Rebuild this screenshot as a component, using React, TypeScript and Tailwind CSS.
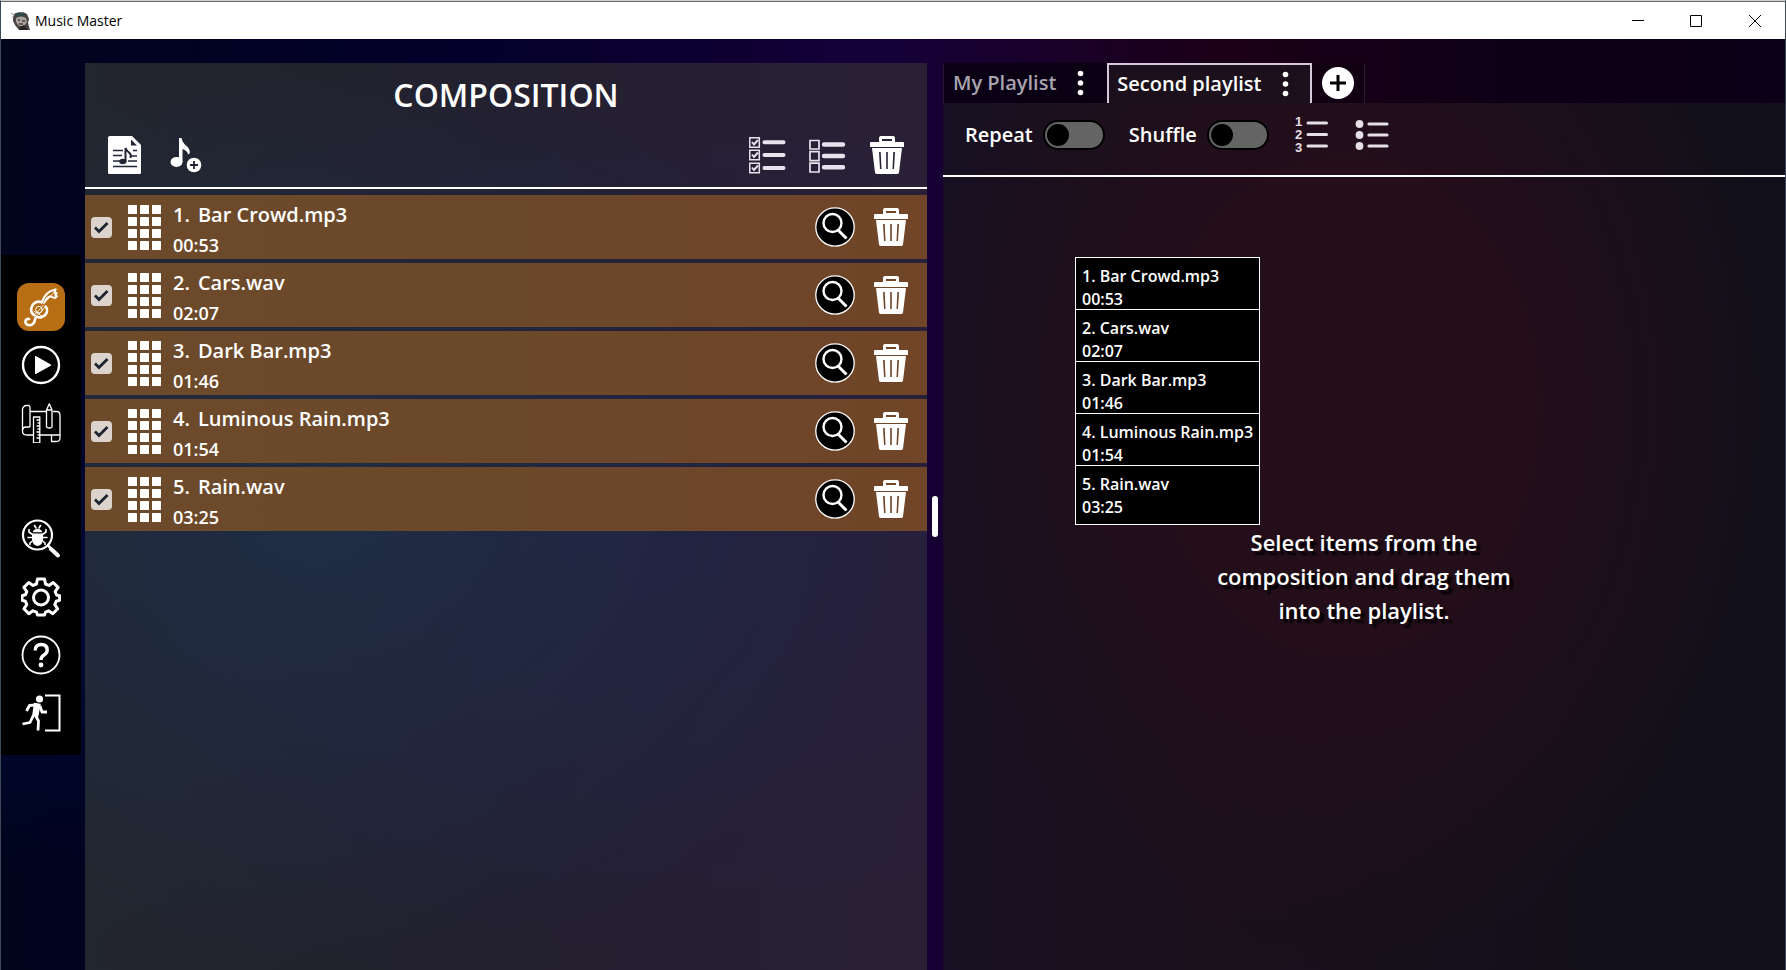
import React from "react";

type IconProps = { className?: string };

const tracks = [
  { title: "Bar Crowd.mp3", time: "00:53" },
  { title: "Cars.wav", time: "02:07" },
  { title: "Dark Bar.mp3", time: "01:46" },
  { title: "Luminous Rain.mp3", time: "01:54" },
  { title: "Rain.wav", time: "03:25" },
];

function AppIcon() {
  return (
    <svg viewBox="0 0 20 20" className="size-5" aria-hidden="true">
      <path d="M2 6 4 2l4 1 4-2 4 2 2 5-1 4 2 7H8L4 14 2 10Z" fill="#4a4444" />
      <path d="M5 2 9 1l5 2 2 3-6-1-5 1Z" fill="#2f4a46" />
      <path d="M5 7q5-3 10 0l1 4-3 4H8l-3-4Z" fill="#a9a19b" />
      <path d="M7 9h2M11 10h3M8 13h4" stroke="#4c4240" strokeWidth="1.3" />
      <path d="M0 2l3 2M1 6l2 1" stroke="#8a8a8a" />
      <path d="M9 16l4-2 4 5H8Z" fill="#2c2325" />
    </svg>
  );
}

function GuitarClefIcon() {
  return (
    <svg viewBox="0 0 144 144" className="size-12" fill="none" stroke="#fff" strokeLinecap="round" strokeLinejoin="round" aria-hidden="true">
      <path d="M36 108c-8-2-13 5-10 12 4 9 19 9 25-1 4-8 2-15 8-18 8 4 20 2 27-7 6-8 5-18 0-23" strokeWidth="8" />
      <path d="M74 58c-14-6-28 3-31 17-2 10 2 18 10 22" strokeWidth="8" />
      <path d="M74 58 82 42q6-11 17-17l17-6-4 10 7 1-4 7 5 3-6 5-6-2-9-3-9 5-8 13" strokeWidth="6" />
      <path d="M80 62 108 32" strokeWidth="3" />
      <circle cx="66" cy="80" r="10" strokeWidth="3" />
      <path d="m52 85 22 14M56 92l24-26M62 97l22-24" strokeWidth="2.5" />
    </svg>
  );
}

function PlayIcon() {
  return (
    <svg viewBox="0 0 40 40" className="size-10" aria-hidden="true">
      <circle cx="20" cy="20" r="18" fill="none" stroke="#fff" strokeWidth="2.4" />
      <path d="M14 11.500v17q0 .8.8.4l15-8.200q.8-.7 0-1.300l-15-8.300q-.8-.4-.8.4Z" fill="#fff" />
    </svg>
  );
}

function BlueprintIcon() {
  return (
    <svg viewBox="0 0 40 40" className="size-10" fill="none" stroke="#fff" strokeWidth="1.300" strokeLinejoin="round" aria-hidden="true">
      <path d="M9 24V5.500a3 3 0 0 0-1-3H5.500a4 4 0 0 0-4 4V28q0 4 4 4H12M9 24H5q-3.500 0-3.500 4M9 8.500h16.500M32 8.500h3.500q3.500 0 3.500 4V35q0 3.500-4 3.500h-4.500V32H19M30.500 32H39M26 8.500H9" />
      <path d="M12.500 14h6.300v26h-6.300ZM15.500 17h3M16.500 20h2M15.500 23h3M16.500 26h2M15.500 29h3M16.500 32h2M15.500 35h3" />
      <path d="M25.500 7 28.300.800 31 7v16.500q0 1.500-2.700 1.500t-2.800-1.500ZM25.500 7H31" fill="#000" />
    </svg>
  );
}

function BugSearchIcon() {
  return (
    <svg viewBox="0 0 40 40" className="size-10" fill="none" stroke="#fff" strokeLinecap="round" aria-hidden="true">
      <circle cx="16.500" cy="16" r="14.500" strokeWidth="2.200" />
      <path d="m27 26.500 2.500 2.500" strokeWidth="2.500" />
      <path d="m30 30 7 6.500" strokeWidth="4" />
      <path d="M12 12q4.500-4.500 9 0v1.300h-9ZM11 14.500h11v5q0 6.500-5.500 7.500-5.500-1-5.500-7.500Z" fill="#fff" stroke="none" />
      <path d="M13.500 6.500 15 9M19.500 6.500 18 9M11.500 15.500 8 13V10.500M21.500 15.500l3.500-2.500V10.500M11.500 18.500H7M21.500 18.500H26M12 21.500l-3 2.500V25.500M21 21.500l3 2.500V25.500" strokeWidth="1.600" />
    </svg>
  );
}

function GearIcon() {
  return (
    <svg viewBox="0 0 40 40" className="size-10" fill="none" stroke="#fff" strokeWidth="3" strokeLinejoin="round" aria-hidden="true">
      <path d="M16.500 2h7l1 5 3.500 1.400 4.200-2.900 4.900 4.900-2.900 4.200 1.400 3.400 3 .8v4.400l-3.400 1-1.400 3.400 2.900 4.200-4.900 4.900-4.200-2.900-3.100 1.300-1 3h-7l-1-3-3.500-1.300-4.200 2.900-4.900-4.900 2.900-4.200-1.400-3.400-3.400-1v-4.400l3.400-1 1.400-3.200-2.900-4.200 4.900-4.900L12 8.400 15.500 7Z" />
      <circle cx="20" cy="20.500" r="7.500" />
    </svg>
  );
}

function HelpIcon() {
  return (
    <svg viewBox="0 0 40 40" className="size-10" fill="none" stroke="#fff" aria-hidden="true">
      <circle cx="20" cy="20" r="18.500" strokeWidth="1.800" />
      <path d="M14.200 15.500q0-6 6-6t6 5.500q0 3-3.200 5-3 1.800-3 5" strokeWidth="3.400" />
      <circle cx="20" cy="30" r="2.400" fill="#fff" stroke="none" />
    </svg>
  );
}

function ExitIcon() {
  return (
    <svg viewBox="0 0 40 40" className="size-10" fill="none" stroke="#fff" aria-hidden="true">
      <path d="M24 2.500h14.500v35H24" strokeWidth="2" />
      <circle cx="18.500" cy="6" r="3.600" fill="#fff" stroke="none" />
      <path d="M15.500 11.800 8.500 12.500 5.500 18M19 13l2 6h5M12.500 22l-3.500 7.500L1.500 31M14.500 22.500l3 5.500-.5 9.500" strokeWidth="2.800" strokeLinejoin="round" />
      <path d="m13.500 10.500 5.500 1-2.500 12-4.500-1.500Z" fill="#fff" strokeWidth="1.500" strokeLinejoin="round" />
    </svg>
  );
}

function SheetMusicIcon() {
  return (
    <svg viewBox="0 0 40 40" className="size-10" aria-hidden="true">
      <path d="M5 1h22l9 9v27.500q0 1.500-1.500 1.500h-30Q3 39 3 37.500v-35Q3 1 5 1Z" fill="#fff" />
      <path d="M26 4.500v6h6Z" fill="#222436" />
      <path d="M8 15.500h10M8 20.500h9M8 26h7M25 21h7M28 15.500h4M23 26h9M8 31.500h24" stroke="#222436" strokeWidth="1.300" />
      <path d="M20.500 27V13q1 3 4 5 2 2 1 5" fill="none" stroke="#222436" strokeWidth="2" />
      <ellipse cx="17.800" cy="26.500" rx="3.600" ry="2.800" fill="#222436" />
    </svg>
  );
}

function AddNoteIcon() {
  return (
    <svg viewBox="0 0 40 40" className="size-10" aria-hidden="true">
      <ellipse cx="11.500" cy="27" rx="6" ry="5" fill="#fff" />
      <path d="M14 27V3h2.600q.5 4.500 5 8 4 3.500 3 7.500l-1.500 1q-.5-4-5.600-5.500v13Z" fill="#fff" />
      <circle cx="29" cy="30" r="7.300" fill="#fff" />
      <path d="M29 26v8M25 30h8" stroke="#222436" strokeWidth="1.800" />
    </svg>
  );
}

function CheckListIcon({ checked }: { checked: boolean }) {
  return checked ? (
    <svg viewBox="0 0 40 40" className="size-10" fill="none" stroke="#e6e3ee" aria-hidden="true">
      <path d="M2.800 2.800h9.500v9.500H2.800ZM2.800 15.300h9.500v9.500H2.800ZM2.800 28.300h9.500v9.500H2.800Z" strokeWidth="1.500" />
      <path d="m5 7 2 2.500L11 5M5 19.500 7 22l4-4.500M5 32.500 7 35l4-4.500" strokeWidth="2" />
      <path d="M17.500 7.200h19M17.500 20h19M17.500 33h19" strokeWidth="4" strokeLinecap="round" />
    </svg>
  ) : (
    <svg viewBox="0 0 40 40" className="size-10" fill="none" stroke="#e6e3ee" aria-hidden="true">
      <path d="M3 5.500h9v8.500H3ZM3 16.700h9v9H3ZM3 28.200h9V37H3Z" strokeWidth="1.700" />
      <path d="M17 9.500h19M17 21h19M17 32.300h19" strokeWidth="4.400" strokeLinecap="round" />
    </svg>
  );
}

function TrashIcon() {
  return (
    <svg viewBox="0 0 40 40" className="size-10" aria-hidden="true">
      <path fillRule="evenodd" fill="#fff" d="M14 1h12q2 0 2 2v4h8q1 0 1 1v4H3V8q0-1 1-1h8V3q0-2 2-2ZM15 4v2h10V4Z" />
      <path fillRule="evenodd" fill="#fff" d="M5 13h30l-3 24.500q-.3 1.500-2 1.500H10q-1.700 0-2-1.500ZM12 17l1 17h1.500L13.700 17ZM19.200 17v17h1.600V17ZM26.300 17l-.8 17H27l1-17Z" />
    </svg>
  );
}

function DragGrid({ className = "" }: IconProps) {
  return (
    <svg viewBox="0 0 33 45" className={className} fill="#fff" aria-hidden="true">
      {[0, 12, 24].map((x) =>
        [0, 12, 24, 36].map((y) => <rect key={`${x}-${y}`} x={x} y={y} width="9" height="9" rx="0.5" />)
      )}
    </svg>
  );
}

function SearchIcon() {
  return (
    <svg viewBox="0 0 40 40" className="size-10" fill="none" stroke="#fff" aria-hidden="true">
      <circle cx="20" cy="20" r="19.200" fill="#000" strokeWidth="1.300" />
      <circle cx="17.500" cy="16" r="9" strokeWidth="2.400" />
      <path d="m23.500 23.500 8 8" strokeWidth="3" />
    </svg>
  );
}

function DotsIcon() {
  return (
    <svg viewBox="0 0 24 32" className="h-8 w-6" fill="#fff" aria-hidden="true">
      <circle cx="12.500" cy="6.500" r="2.800" />
      <circle cx="12.500" cy="16" r="2.800" />
      <circle cx="12.500" cy="25.500" r="2.800" />
    </svg>
  );
}

function NumberedListIcon() {
  return (
    <svg viewBox="0 0 40 40" className="size-10" aria-hidden="true">
      <g fill="#e6dfe6" fontFamily="Liberation Sans, sans-serif" fontWeight="700" fontSize="13">
        <text x="2" y="11">1</text>
        <text x="2" y="24">2</text>
        <text x="2" y="37">3</text>
      </g>
      <path d="M15 8h18.500M15 19.500h18.500M15 31h18.500" stroke="#e6dfe6" strokeWidth="3" strokeLinecap="round" />
    </svg>
  );
}

function BulletListIcon() {
  return (
    <svg viewBox="0 0 40 40" className="size-10" fill="#e6dfe6" aria-hidden="true">
      <circle cx="6.500" cy="9" r="3.900" />
      <circle cx="6.500" cy="20" r="3.900" />
      <circle cx="6.500" cy="31" r="3.900" />
      <path d="M16 9h18M16 20h18M16 31h18" stroke="#e6dfe6" strokeWidth="3.200" strokeLinecap="round" />
    </svg>
  );
}

function IconButton({ label, children }: { label: string; children: React.ReactNode }) {
  return (
    <button type="button" aria-label={label} className="flex size-10 shrink-0 items-center justify-center">
      {children}
    </button>
  );
}

function NavButton({ label, active = false, children }: { label: string; active?: boolean; children: React.ReactNode }) {
  return (
    <button
      type="button"
      aria-label={label}
      className={`flex size-12 items-center justify-center rounded-xl ${active ? "bg-[#b86e14]" : ""}`}
    >
      {children}
    </button>
  );
}

function Toggle({ label }: { label: string }) {
  return (
    <label className="flex items-center gap-2.5">
      {label}
      <input
        type="checkbox"
        role="switch"
        className="flex h-[30px] w-[62px] appearance-none items-center rounded-full border-2 border-black bg-[#646464] px-0.5 before:size-[22px] before:rounded-full before:bg-black"
      />
    </label>
  );
}

function TrackRow({ index, title, time }: { index: number; title: string; time: string }) {
  return (
    <li className="flex h-16 items-center bg-[linear-gradient(90deg,#6d4a2a,#6b482a_45%,#704528)] pr-4 pl-1.5">
      <span className="grid size-[21px] shrink-0">
        <input
          type="checkbox"
          defaultChecked
          aria-label={`Select ${title}`}
          className="col-start-1 row-start-1 size-[21px] appearance-none rounded-sm bg-[#dcd4cc]"
        />
        <svg viewBox="0 0 21 21" className="pointer-events-none col-start-1 row-start-1 size-[21px]" fill="none" stroke="#1c2430" aria-hidden="true">
          <path d="m4 10.500 4 4L16.500 6" strokeWidth="2.800" />
        </svg>
      </span>
      <DragGrid className="ml-4 h-[45px] w-[33px] shrink-0" />
      <div className="ml-3 min-w-0 flex-1 pt-1">
        <p className="flex gap-2 text-xl leading-8">
          <span>{index}.</span>
          <span className="truncate">{title}</span>
        </p>
        <p className="text-lg leading-7">{time}</p>
      </div>
      <div className="flex gap-4">
        <IconButton label={`Find ${title}`}><SearchIcon /></IconButton>
        <IconButton label={`Delete ${title}`}><TrashIcon /></IconButton>
      </div>
    </li>
  );
}

function TitleBar() {
  return (
    <header className="flex h-[38px] shrink-0 items-center justify-between border-t border-[#6b6b6b] bg-white text-black">
      <div className="flex items-center gap-1 pl-2.5">
        <AppIcon />
        <h1 className="text-sm font-normal">Music Master</h1>
      </div>
      <div className="flex">
        <button type="button" aria-label="Minimize" className="flex h-8 w-[58px] items-center justify-center">
          <svg viewBox="0 0 12 12" className="size-3" stroke="#000"><path d="M0 5.500h12" /></svg>
        </button>
        <button type="button" aria-label="Maximize" className="flex h-8 w-[58px] items-center justify-center">
          <svg viewBox="0 0 12 12" className="size-3" fill="none" stroke="#000"><path d="M.5.5h11v11H.5Z" /></svg>
        </button>
        <button type="button" aria-label="Close" className="flex h-8 w-[60px] items-center justify-center">
          <svg viewBox="0 0 12 12" className="size-3" stroke="#000"><path d="m0 0 12 12M12 0 0 12" /></svg>
        </button>
      </div>
    </header>
  );
}

function Sidebar() {
  return (
    <nav aria-label="Main" className="flex w-20 shrink-0 flex-col items-center gap-2.5 self-center bg-black pt-7 pb-[18px]">
      <NavButton label="Composition" active><GuitarClefIcon /></NavButton>
      <NavButton label="Play"><PlayIcon /></NavButton>
      <NavButton label="Designer"><BlueprintIcon /></NavButton>
      <div className="h-12" />
      <NavButton label="Debug"><BugSearchIcon /></NavButton>
      <NavButton label="Settings"><GearIcon /></NavButton>
      <NavButton label="Help"><HelpIcon /></NavButton>
      <NavButton label="Exit"><ExitIcon /></NavButton>
    </nav>
  );
}

function CompositionPanel() {
  return (
    <section className="flex min-w-0 flex-1 flex-col bg-[radial-gradient(ellipse_at_28%_50%,#1f2d44_0%,#1f2d4400_70%),radial-gradient(ellipse_at_65%_50%,#241f42_0%,#241f4200_70%),linear-gradient(90deg,#22262f,#23202f_50%,#2a2036)]">
      <h2 className="text-center text-[32px] leading-[64px]">COMPOSITION</h2>
      <div className="mb-1 flex h-14 items-center justify-between px-5">
        <div className="flex gap-5">
          <IconButton label="New composition"><SheetMusicIcon /></IconButton>
          <IconButton label="Add track"><AddNoteIcon /></IconButton>
        </div>
        <div className="flex gap-5">
          <IconButton label="Select all"><CheckListIcon checked /></IconButton>
          <IconButton label="Deselect all"><CheckListIcon checked={false} /></IconButton>
          <IconButton label="Delete selected"><TrashIcon /></IconButton>
        </div>
      </div>
      <hr className="border-t-2 border-white" />
      <ul className="mt-1.5 flex flex-col gap-1">
        {tracks.map((t, i) => (
          <TrackRow key={t.title} index={i + 1} title={t.title} time={t.time} />
        ))}
      </ul>
    </section>
  );
}

function PlaylistPanel() {
  return (
    <section className="relative flex min-w-0 flex-1 flex-col">
      <div className="flex h-10 text-xl">
        <div className="flex items-center gap-3 border-l border-white/10 bg-[#06000f]/80 pr-[15px] pl-[9px]">
          <button type="button" className="text-[#a9a4ad]">My Playlist</button>
          <button type="button" aria-label="My Playlist options"><DotsIcon /></button>
        </div>
        <div className="flex items-center gap-3 border-2 border-b-0 border-[#d8c8dc] bg-[#1b101b] pr-[13px] pl-2">
          <button type="button">Second playlist</button>
          <button type="button" aria-label="Second playlist options"><DotsIcon /></button>
        </div>
        <div className="flex items-center border-r border-white/10 bg-black/20 px-2.5">
          <button type="button" aria-label="Add playlist">
            <svg viewBox="0 0 32 32" className="size-8" aria-hidden="true">
              <circle cx="16" cy="16" r="16" fill="#fff" />
              <path d="M16 8v16M8 16h16" stroke="#000" strokeWidth="3" />
            </svg>
          </button>
        </div>
      </div>
      <div className="flex flex-1 flex-col bg-[radial-gradient(ellipse_at_48%_35%,#260e19_0%,#230e1a_30%,#1b0f1b00_70%),linear-gradient(90deg,#171022,#1a101c_30%,#12101a_80%,#11101a)]">
        <div className="mb-2 flex h-16 items-center gap-6 px-[22px] text-xl">
          <Toggle label="Repeat" />
          <Toggle label="Shuffle" />
          <div className="flex gap-5">
            <IconButton label="Numbered list"><NumberedListIcon /></IconButton>
            <IconButton label="Bulleted list"><BulletListIcon /></IconButton>
          </div>
        </div>
        <hr className="border-t-2 border-white" />
        <div className="flex flex-1 items-center justify-center pt-1">
          <p className="w-80 text-center text-[22px] leading-[34px] [text-shadow:4px_4px_2px_#000]">
            Select items from the composition and drag them into the playlist.
          </p>
        </div>
      </div>
      <ul className="absolute top-[194px] left-[132px] border border-white bg-black pb-2 text-base">
        {tracks.map((t, i) => (
          <li key={t.title} className="h-[52px] border-b border-white px-1.5 pt-[7px] leading-[23px] last:h-[50px] last:border-b-0">
            <p>{i + 1}. {t.title}</p>
            <p>{t.time}</p>
          </li>
        ))}
      </ul>
    </section>
  );
}

export default function App() {
  return (
    <div className="flex min-h-screen flex-col border-x border-t border-x-[#3c4a58] border-t-[#cfcfcf] bg-[#00000f] font-['Open_Sans','Noto_Sans',sans-serif] font-semibold text-white">
      <TitleBar />
      <main className="flex flex-1 bg-[radial-gradient(ellipse_at_0%_60%,#000a38_0%,#000a3800_35%),linear-gradient(90deg,#00041c,#03002a_25%,#150038_50%,#1c0018_68%,#0d0016_85%,#0c0018)]">
        <Sidebar />
        <div className="ml-1 flex min-w-0 flex-1 pt-6">
          <CompositionPanel />
          <div className="flex w-4 shrink-0 items-center justify-center">
            <button type="button" aria-label="Resize panels" className="h-[41px] w-1.5 rounded-sm bg-white" />
          </div>
          <PlaylistPanel />
        </div>
      </main>
    </div>
  );
}
